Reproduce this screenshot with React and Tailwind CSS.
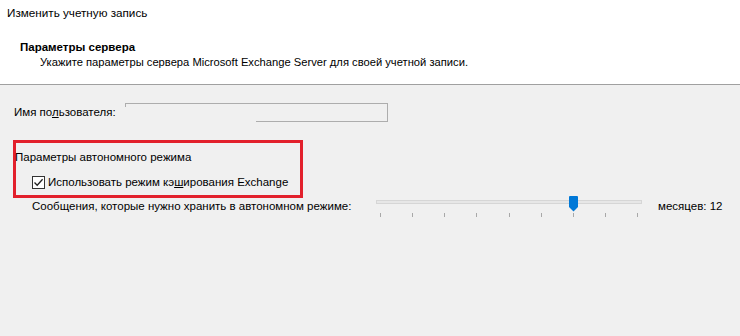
export default function App() {
  const ticks = [0, 1, 2, 3, 4, 5, 6, 7, 8];

  return (
    <div className="w-[740px] h-[336px] flex flex-col bg-[#f0f0f0] text-black whitespace-nowrap" style={{ fontFamily: '"Liberation Sans", Arial, sans-serif' }}>
      {/* Header */}
      <div className="h-[85px] bg-white border-b border-[#a0a0a0] flex flex-col">
        <div className="pl-[7px] pt-[5px] text-[11.7px] leading-[16px]">Изменить учетную запись</div>
        <div className="pl-[20px] pt-[19px] text-[11.5px] leading-[14px] font-bold">Параметры сервера</div>
        <div className="pl-[40px] pt-[1px] text-[11.2px] leading-[14px]">
          Укажите параметры сервера Microsoft Exchange Server для своей учетной записи.
        </div>
      </div>

      {/* Username */}
      <div className="flex items-center pt-[18px] pl-[14px]">
        <div className="w-[111px] text-[11.5px] leading-[16px] -mt-[2px]">
          Имя по<span className="underline">л</span>ьзователя:
        </div>
        <div className="relative w-[263px] h-[19px] border-t border-r border-[#adadad]">
          <div className="absolute left-0 top-0 w-px h-[3px] bg-[#adadad]" />
          <div className="absolute right-0 bottom-0 w-[131px] h-px bg-[#adadad]" />
        </div>
      </div>

      {/* Offline mode box */}
      <div className="ml-[13px] mt-[18px] w-[290px] h-[58px] border-[3px] border-[#e2202c] flex flex-col">
        <div className="pt-[6px] text-[11.5px] leading-[16px] -ml-[1px]">Параметры автономного режима</div>
        <div className="flex items-center pl-[16px] pt-[9px]">
          <div className="w-[13px] h-[13px] border border-[#333] bg-white flex items-center justify-center">
            <svg width="11" height="11" viewBox="0 0 11 11">
              <path d="M1.5 5.5 L4.2 8.3 L9.6 2.2" fill="none" stroke="#222" strokeWidth="1.3" />
            </svg>
          </div>
          <div className="pl-[3px] text-[11.5px] leading-[16px]">
            Использовать режим кэ<span className="underline">ш</span>ирования Exchange
          </div>
        </div>
      </div>

      {/* Messages slider */}
      <div className="flex items-start pl-[32px]">
        <div className="w-[344px] text-[11.5px] leading-[16px]">Сообщения, которые нужно хранить в автономном режиме:</div>
        <div className="flex flex-col w-[266px] -mt-[2px]">
          <div className="relative h-[12px] flex items-center">
            <div className="w-full h-[4px] bg-[#e7e7e7] border border-[#d6d6d6]" />
            <svg className="absolute left-[193px] top-0" width="9" height="16" viewBox="0 0 9 16">
              <path d="M0 1 Q0 0 1 0 L8 0 Q9 0 9 1 L9 11 L4.5 15.5 L0 11 Z" fill="#0078d7" />
            </svg>
          </div>
          <div className="flex justify-between px-[4px] pt-[5px]">
            {ticks.map((t) => (
              <div key={t} className="w-px h-[4px] bg-[#a8a8a8]" />
            ))}
          </div>
        </div>
        <div className="pl-[16px] text-[11.5px] leading-[16px]">месяцев: 12</div>
      </div>
    </div>
  );
}
